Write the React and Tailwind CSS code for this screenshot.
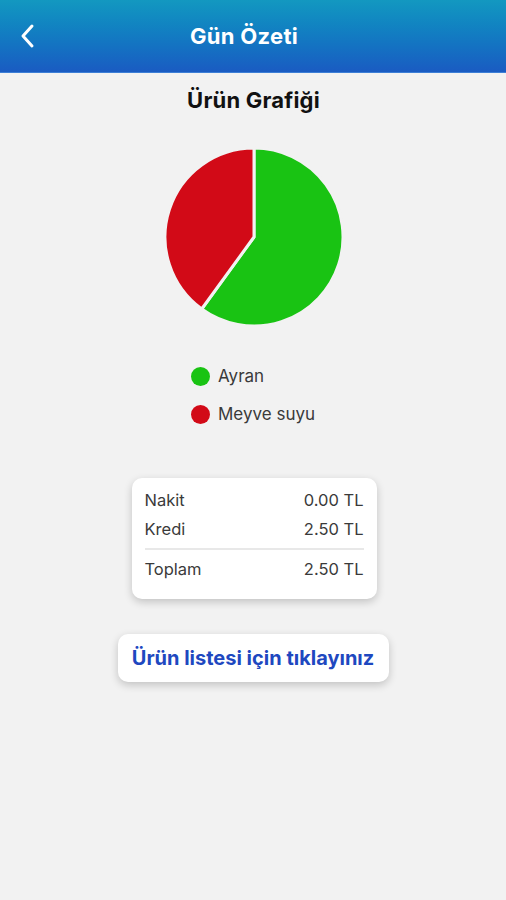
import React from 'react';

const font = { fontFamily: 'Inter, "Noto Sans", Arial, sans-serif' };

function Pie() {
  const cx = 91, cy = 91, r = 89;
  const a = (216 * Math.PI) / 180;
  const ex = cx + r * Math.sin(a);
  const ey = cy - r * Math.cos(a);
  return (
    <svg width="182" height="182" viewBox="0 0 182 182">
      <path d={`M${cx} ${cy} L${cx} ${cy - r} A${r} ${r} 0 1 1 ${ex} ${ey} Z`} fill="#19c313" stroke="#f2f2f2" strokeWidth="3" strokeLinejoin="round" />
      <path d={`M${cx} ${cy} L${ex} ${ey} A${r} ${r} 0 0 1 ${cx} ${cy - r} Z`} fill="#d20a17" stroke="#f2f2f2" strokeWidth="3" strokeLinejoin="round" />
    </svg>
  );
}

function Row({ label, value }) {
  return (
    <div className="flex justify-between text-[16.5px] text-[#3a3a3a] leading-[20px]">
      <span>{label}</span>
      <span>{value}</span>
    </div>
  );
}

export default function App() {
  return (
    <div className="min-h-[900px] w-[506px] bg-[#f2f2f2]" style={font}>
      <header className="relative flex h-[73px] items-center justify-center bg-gradient-to-b from-[#1398c0] to-[#1a5bc2] border-b border-[#3d7fd6]">
        <button className="absolute left-[16px] top-[22px] text-white">
          <svg width="24" height="28" viewBox="0 0 24 28" fill="none" stroke="white" strokeWidth="3" strokeLinecap="round" strokeLinejoin="round">
            <path d="M16 4 L7 14 L16 24" />
          </svg>
        </button>
        <h1 className="mr-[18px] text-[22px] font-bold tracking-[0.3px] text-white">Gün Özeti</h1>
      </header>

      <div className="flex flex-col items-center">
        <h2 className="mt-[14px] ml-[1px] text-[22px] font-bold text-[#111] leading-[26px] tracking-[0.2px]">Ürün Grafiği</h2>
        <div className="mt-[33px] ml-[2px]">
          <Pie />
        </div>

        <div className="mt-[36px] flex w-[160px] flex-col gap-[12px] ml-[36px]">
          <div className="flex items-center gap-[8px]">
            <span className="h-[19px] w-[19px] rounded-full bg-[#19c313]" />
            <span className="text-[17px] text-[#3a3a3a]">Ayran</span>
          </div>
          <div className="flex items-center gap-[8px]">
            <span className="h-[19px] w-[19px] rounded-full bg-[#d20a17]" />
            <span className="text-[17px] text-[#3a3a3a]">Meyve suyu</span>
          </div>
        </div>

        <div className="mt-[51px] ml-[2px] w-[245px] rounded-[10px] bg-white px-[13px] pt-[12px] pb-[20px] shadow-[0_3px_8px_rgba(0,0,0,0.2)]">
          <div className="flex flex-col gap-[9px]">
            <Row label="Nakit" value="0.00 TL" />
            <Row label="Kredi" value="2.50 TL" />
          </div>
          <div className="mt-[9px] mb-[9px] h-[2px] bg-[#e8e8e8]" />
          <Row label="Toplam" value="2.50 TL" />
        </div>

        <button className="mt-[35px] h-[48px] w-[271px] rounded-[10px] bg-white text-[20px] font-bold text-[#1e48c0] shadow-[0_3px_8px_rgba(0,0,0,0.2)]">
          Ürün listesi için tıklayınız
        </button>
      </div>
    </div>
  );
}
